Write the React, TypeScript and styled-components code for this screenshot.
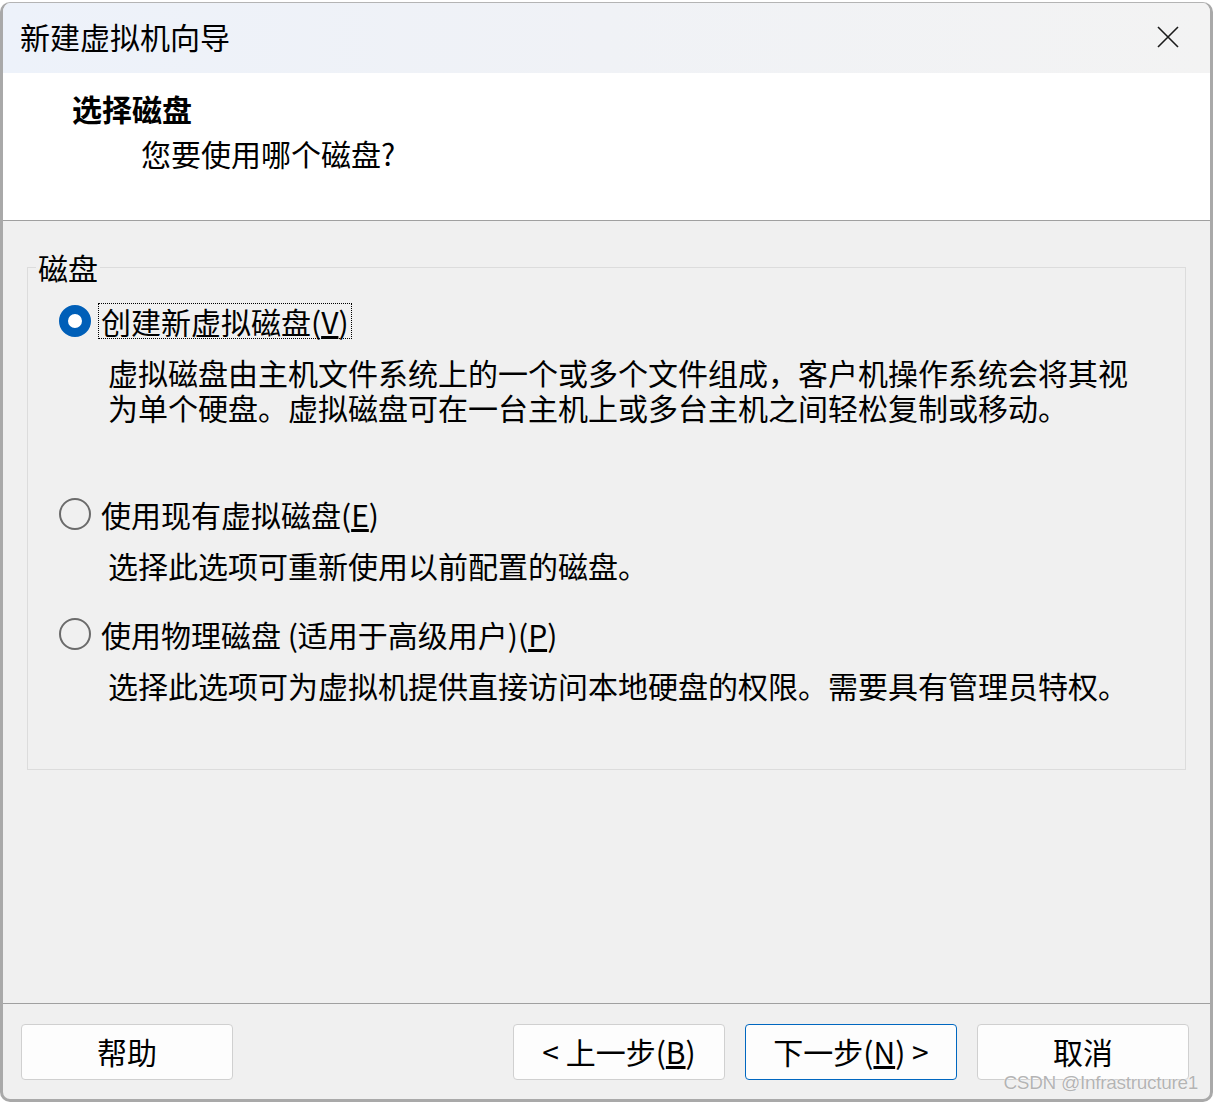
import React from "react";
import styled, { createGlobalStyle } from "styled-components";

const FONT = `"Noto Sans CJK SC", "Noto Sans", sans-serif`;

const GlobalStyle = createGlobalStyle`
  html, body {
    margin: 0;
    padding: 0;
    background: #ffffff;
  }
  body {
    font-family: ${FONT};
    color: #000000;
  }
`;

interface OptionData {
  label: string;
  mnemonic: string;
  description: string;
  checked?: boolean;
  space: number;
}

const OPTIONS: OptionData[] = [
  {
    label: "创建新虚拟磁盘",
    mnemonic: "V",
    description:
      "虚拟磁盘由主机文件系统上的一个或多个文件组成，客户机操作系统会将其视为单个硬盘。虚拟磁盘可在一台主机上或多台主机之间轻松复制或移动。",
    checked: true,
    space: 71,
  },
  {
    label: "使用现有虚拟磁盘",
    mnemonic: "E",
    description: "选择此选项可重新使用以前配置的磁盘。",
    space: 33,
  },
  {
    label: "使用物理磁盘 (适用于高级用户)",
    mnemonic: "P",
    description: "选择此选项可为虚拟机提供直接访问本地硬盘的权限。需要具有管理员特权。",
    space: 0,
  },
];

const CloseIcon = () => (
  <svg width="22" height="22" viewBox="0 0 22 22">
    <path d="M1 1 L21 21 M21 1 L1 21" stroke="#1b1b1b" strokeWidth="1.6" fill="none" />
  </svg>
);

export default function App() {
  return (
    <>
      <GlobalStyle />
      <Window>
        <TitleBar>
          <Title>新建虚拟机向导</Title>
          <CloseBtn>
            <CloseIcon />
          </CloseBtn>
        </TitleBar>

        <Header>
          <HeaderTitle>选择磁盘</HeaderTitle>
          <HeaderSub>您要使用哪个磁盘?</HeaderSub>
        </Header>

        <Body>
          <GroupBox>
            <Legend>磁盘</Legend>
            <OptionList>
              {OPTIONS.map((opt) => (
                <Option key={opt.mnemonic} $space={opt.space}>
                  <RadioRow>
                    <Radio $checked={!!opt.checked} />
                    <RadioLabel $focused={!!opt.checked}>
                      {opt.label}(<u>{opt.mnemonic}</u>)
                    </RadioLabel>
                  </RadioRow>
                  <Description>{opt.description}</Description>
                </Option>
              ))}
            </OptionList>
          </GroupBox>
        </Body>

        <Footer>
          <Button>帮助</Button>
          <Spacer />
          <Button>
            &lt; 上一步(<u>B</u>)
          </Button>
          <Button $primary>
            下一步(<u>N</u>) &gt;
          </Button>
          <Button>取消</Button>
        </Footer>

        <Watermark>CSDN @Infrastructure1</Watermark>
      </Window>
    </>
  );
}

const Window = styled.div`
  position: relative;
  margin-top: 2px;
  height: 1100px;
  box-sizing: border-box;
  display: flex;
  flex-direction: column;
  border: 3px solid #a9a9a9;
  border-top: 1px solid #b4b4b4;
  border-radius: 10px;
  overflow: hidden;
  background: #f0f0f0;
`;

const TitleBar = styled.div`
  height: 70px;
  flex-shrink: 0;
  display: flex;
  align-items: center;
  justify-content: space-between;
  padding: 0 31px 0 17px;
  background: linear-gradient(90deg, #edf2fa 0%, #f0f2f6 50%, #f3f3f3 100%);
`;

const Title = styled.div`
  font-size: 30px;
  line-height: 40px;
  margin-top: -5px;
`;

const CloseBtn = styled.div`
  display: flex;
  align-items: center;
  margin-top: -3px;
`;

const Header = styled.div`
  height: 148px;
  flex-shrink: 0;
  box-sizing: border-box;
  padding: 15px 0 0 69px;
  background: #ffffff;
  border-bottom: 1px solid #a0a0a0;
  font-size: 30px;
  line-height: 40px;
`;

const HeaderTitle = styled.div`
  font-weight: 700;
`;

const HeaderSub = styled.div`
  padding-left: 69px;
  margin-top: 5px;
`;

const Body = styled.div`
  height: 783px;
  flex-shrink: 0;
  box-sizing: border-box;
  padding: 31px 24px 0;
  border-bottom: 1px solid #a0a0a0;
`;

const GroupBox = styled.fieldset`
  margin: 0;
  padding: 21px 0 66px 0;
  border: 1px solid #dcdcdc;
  min-width: 0;
`;

const Legend = styled.legend`
  margin-left: 8px;
  padding: 0 2px;
  font-size: 30px;
  line-height: 30px;
`;

const OptionList = styled.div`
  padding-left: 31px;
`;

const Option = styled.div<{ $space: number }>`
  margin-bottom: ${(p) => p.$space}px;
`;

const RadioRow = styled.div`
  display: flex;
  align-items: center;
  height: 36px;
`;

const Radio = styled.span<{ $checked: boolean }>`
  width: 32px;
  height: 32px;
  box-sizing: border-box;
  border-radius: 50%;
  flex-shrink: 0;
  margin-right: 7px;
  background: ${(p) => (p.$checked ? "#ffffff" : "transparent")};
  border: ${(p) => (p.$checked ? "9px solid #005fb8" : "2px solid #6b6b6b")};
`;

const RadioLabel = styled.span<{ $focused: boolean }>`
  font-size: 30px;
  line-height: 34px;
  padding: 0 2px;
  border: 1px dotted ${(p) => (p.$focused ? "#000000" : "transparent")};
`;

const Description = styled.div`
  margin: 16px 0 0 49px;
  max-width: 1026px;
  font-size: 30px;
  line-height: 35px;
`;

const Footer = styled.div`
  flex: 1;
  display: flex;
  align-items: flex-start;
  gap: 20px;
  padding: 20px 21px 0 18px;
`;

const Spacer = styled.div`
  flex: 1;
`;

const Button = styled.div<{ $primary?: boolean }>`
  width: 212px;
  height: 56px;
  box-sizing: border-box;
  display: flex;
  align-items: center;
  justify-content: center;
  background: #fdfdfd;
  border: 1px solid ${(p) => (p.$primary ? "#0067c0" : "#d0d0d0")};
  border-radius: 4px;
  font-size: 30px;
  line-height: 40px;
  padding-bottom: 2px;
`;

const Watermark = styled.div`
  position: absolute;
  right: 12px;
  bottom: 5px;
  font-family: "Liberation Sans", Arial, sans-serif;
  font-size: 19px;
  letter-spacing: -0.3px;
  color: #b4b4b4;
  text-shadow: 0 0 1px #ffffff, 0 0 1px #ffffff;
`;
